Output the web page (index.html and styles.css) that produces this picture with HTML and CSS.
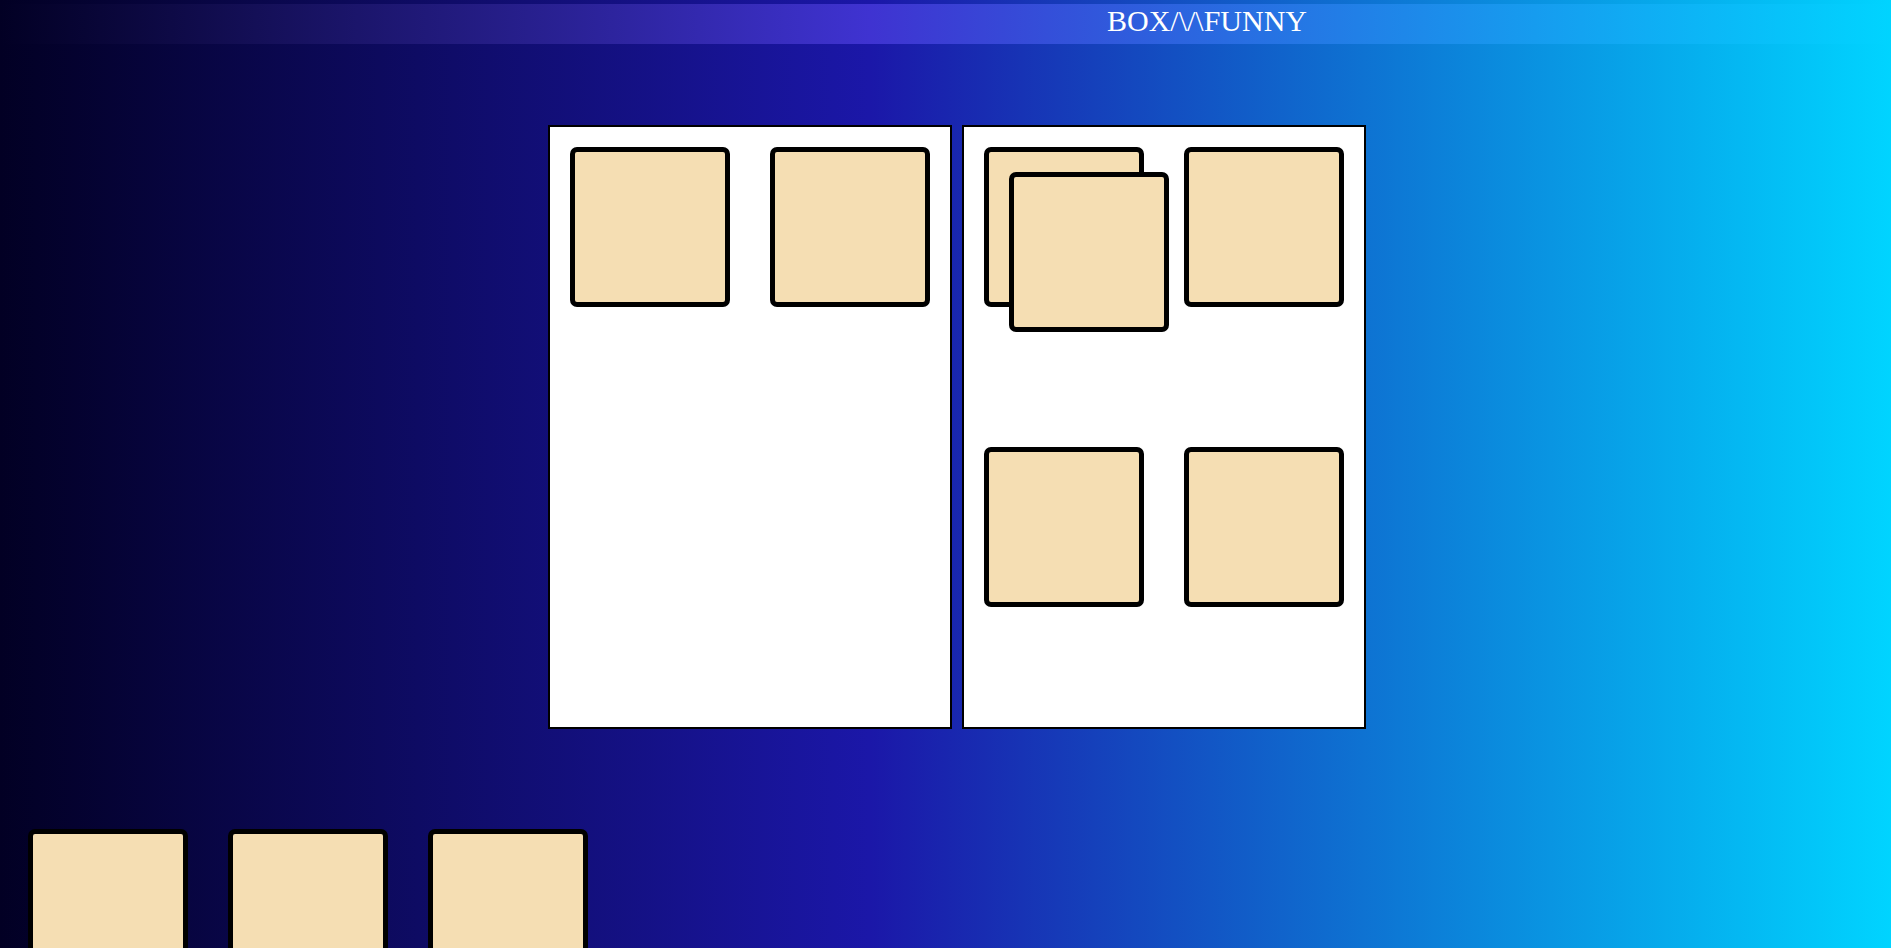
FILE: index.html
```html
<!DOCTYPE html>
<html lang="en">
<head>
<meta charset="utf-8">
<title>BOX/\/\FUNNY</title>
<link rel="stylesheet" href="styles.css">
</head>
<body>
  <header class="title-bar">
    <h1 class="title">BOX/\/\FUNNY</h1>
  </header>
  <main class="board">
    <section class="panel">
      <div class="box"></div>
      <div class="box"></div>
    </section>
    <section class="panel panel--spaced">
      <div class="box"></div>
      <div class="box"></div>
      <div class="box"></div>
      <div class="box"></div>
      <div class="box box--dragging"></div>
    </section>
  </main>
  <section class="tray">
    <div class="box"></div>
    <div class="box"></div>
    <div class="box"></div>
  </section>
</body>
</html>
```

FILE: styles.css
```css
html, body {
  margin: 0;
  padding: 0;
}

body {
  height: 948px;
  overflow: hidden;
  background: linear-gradient(90deg, #020024 0%, #1b17a8 46%, #00d4ff 100%);
  font-family: "Liberation Serif", "Times New Roman", serif;
}

.title-bar {
  margin-top: 4px;
  height: 40px;
  background: linear-gradient(90deg, #020024 0%, #3f33d1 46%, #00d4ff 100%);
  padding-left: 1107px;
  box-sizing: border-box;
}

.title {
  margin: 0;
  font-weight: normal;
  font-size: 30px;
  line-height: 34px;
  color: #ffffff;
  white-space: nowrap;
}

.board {
  display: flex;
  gap: 10px;
  margin-top: 81px;
  padding-left: 548px;
}

.panel {
  position: relative;
  width: 400px;
  height: 600px;
  border: 2px solid #000;
  background: #ffffff;
  display: flex;
  flex-wrap: wrap;
  align-content: flex-start;
}

.panel--spaced {
  row-gap: 100px;
}

.box {
  width: 150px;
  height: 150px;
  margin: 20px;
  border: 5px solid #000;
  border-radius: 7px;
  background: #f5deb3;
  flex: none;
}

.box--dragging {
  position: absolute;
  left: 45px;
  top: 45px;
  margin: 0;
  z-index: 2;
}

.tray {
  display: flex;
  margin-top: 80px;
  padding-left: 8px;
}
```
